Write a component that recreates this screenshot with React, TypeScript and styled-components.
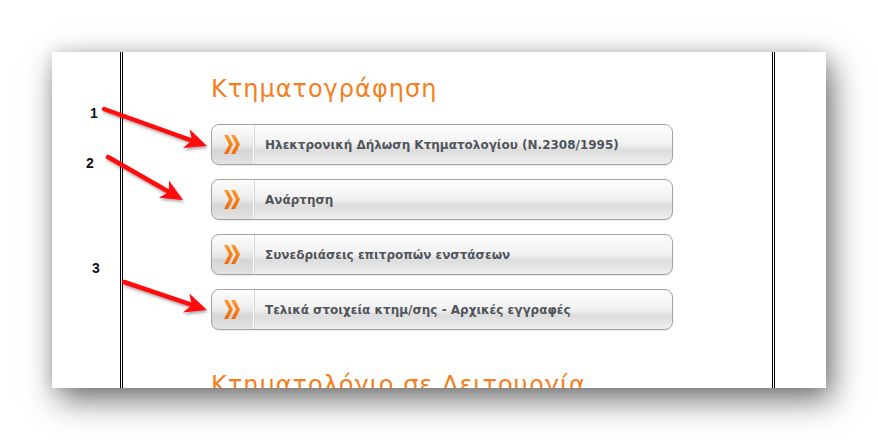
import React from 'react';
import styled, { createGlobalStyle } from 'styled-components';

const GlobalStyle = createGlobalStyle`
  html, body {
    margin: 0;
    padding: 0;
    background: #ffffff;
  }
  body {
    width: 878px;
    height: 440px;
    overflow: hidden;
    font-family: "DejaVu Sans", Verdana, sans-serif;
  }
`;

const Stage = styled.div`
  position: relative;
  width: 878px;
  height: 440px;
  padding: 52px 0 0 52px;
  box-sizing: border-box;
`;

const Panel = styled.div`
  display: flex;
  width: 774px;
  height: 336px;
  background: #ffffff;
  overflow: hidden;
  box-shadow: 6px 12px 30px rgba(0, 0, 0, 0.55), 0 0 14px rgba(0, 0, 0, 0.12);
`;

const Gutter = styled.div<{ $w: number }>`
  flex: 0 0 ${(p) => p.$w}px;
`;

const Rule = styled.div`
  flex: 0 0 1px;
  border-left: 1px solid #000;
  border-right: 1px solid #000;
`;

const Content = styled.div`
  flex: 1;
  display: flex;
  flex-direction: column;
  padding: 22px 0 0 88px;
`;

const SectionTitle = styled.h2`
  margin: 0;
  font-family: "DejaVu Sans", Verdana, sans-serif;
  font-weight: normal;
  font-size: 24px;
  line-height: 30px;
  letter-spacing: 1px;
  color: #f57f20;
`;

const TitleLine = styled.div`
  height: 2px;
  width: 510px;
  margin: 4px 0 16px -30px;
  background: linear-gradient(
    to right,
    rgba(220, 220, 220, 0) 0%,
    #dcdcdc 8%,
    #dcdcdc 85%,
    rgba(220, 220, 220, 0) 100%
  );
`;

const MenuList = styled.div`
  display: flex;
  flex-direction: column;
  gap: 14px;
`;

const MenuButton = styled.a`
  display: flex;
  align-items: stretch;
  width: 462px;
  height: 41px;
  box-sizing: border-box;
  border: 1px solid #a3a3a3;
  border-radius: 8px;
  overflow: hidden;
  text-decoration: none;
  background: linear-gradient(
    to bottom,
    #fdfdfd 0%,
    #f4f4f4 40%,
    #ececec 55%,
    #dddddd 64%,
    #e4e4e4 80%,
    #f0f0f0 100%
  );
  box-shadow: inset 0 1px 0 #ffffff, 0 1px 1px rgba(0, 0, 0, 0.08);
`;

const IconCell = styled.span`
  flex: 0 0 41px;
  display: flex;
  align-items: center;
  justify-content: center;
  border-right: 1px solid #ffffff;
  box-shadow: 1px 0 0 #d6d6d6;
  background: linear-gradient(
    to bottom,
    rgba(0, 0, 0, 0) 0%,
    rgba(0, 0, 0, 0.03) 60%,
    rgba(0, 0, 0, 0.05) 100%
  );
`;

const Label = styled.span`
  display: flex;
  align-items: center;
  padding-left: 11px;
  font-family: "DejaVu Sans", Verdana, sans-serif;
  font-weight: bold;
  font-size: 12px;
  color: #50555b;
`;

const NextTitle = styled(SectionTitle)`
  margin-top: 40px;
`;

const Overlay = styled.svg`
  position: absolute;
  left: 0;
  top: 0;
  width: 878px;
  height: 440px;
  pointer-events: none;
`;

const Marker = styled.span<{ $x: number; $y: number }>`
  position: absolute;
  left: ${(p) => p.$x}px;
  top: ${(p) => p.$y}px;
  font-family: "Liberation Sans", Arial, sans-serif;
  font-weight: bold;
  font-size: 14px;
  line-height: 14px;
  color: #111;
`;

const Chevrons = () => (
  <svg width="17" height="19" viewBox="0 0 17 19">
    <defs>
      <linearGradient id="chev" x1="0" y1="0" x2="0" y2="1">
        <stop offset="0" stopColor="#ff9a2e" />
        <stop offset="1" stopColor="#ee6a08" />
      </linearGradient>
    </defs>
    <path d="M0 0 H4 L9 9.5 L4 19 H0 L5 9.5 Z" fill="url(#chev)" />
    <path d="M7 0 H11 L16 9.5 L11 19 H7 L12 9.5 Z" fill="url(#chev)" />
  </svg>
);

const items = [
  'Ηλεκτρονική Δήλωση Κτηματολογίου (Ν.2308/1995)',
  'Ανάρτηση',
  'Συνεδριάσεις επιτροπών ενστάσεων',
  'Τελικά στοιχεία κτημ/σης - Αρχικές εγγραφές',
];

type Arrow = { x1: number; y1: number; x2: number; y2: number };

const arrows: Arrow[] = [
  { x1: 104, y1: 109, x2: 207, y2: 146 },
  { x1: 108, y1: 157, x2: 183, y2: 200 },
  { x1: 124, y1: 282, x2: 207, y2: 310 },
];

const arrowHead = (a: Arrow) => {
  const dx = a.x2 - a.x1;
  const dy = a.y2 - a.y1;
  const len = Math.hypot(dx, dy);
  const ux = dx / len;
  const uy = dy / len;
  const px = -uy;
  const py = ux;
  const back = 22;
  const wing = 10;
  const notch = 16;
  const bx = a.x2 - ux * back;
  const by = a.y2 - uy * back;
  const nx = a.x2 - ux * notch;
  const ny = a.y2 - uy * notch;
  return [
    `${a.x2},${a.y2}`,
    `${bx + px * wing},${by + py * wing}`,
    `${nx},${ny}`,
    `${bx - px * wing},${by - py * wing}`,
  ].join(' ');
};

const App: React.FC = () => {
  return (
    <>
      <GlobalStyle />
      <Stage>
        <Panel>
          <Gutter $w={68} />
          <Rule />
          <Content>
            <SectionTitle>Κτηματογράφηση</SectionTitle>
            <TitleLine />
            <MenuList>
              {items.map((text) => (
                <MenuButton key={text} href="#">
                  <IconCell>
                    <Chevrons />
                  </IconCell>
                  <Label>{text}</Label>
                </MenuButton>
              ))}
            </MenuList>
            <NextTitle>Κτηματολόγιο σε Λειτουργία</NextTitle>
          </Content>
          <Rule />
          <Gutter $w={51} />
        </Panel>

        <Marker $x={90} $y={106}>1</Marker>
        <Marker $x={86} $y={156}>2</Marker>
        <Marker $x={92} $y={261}>3</Marker>

        <Overlay viewBox="0 0 878 440">
          <defs>
            <filter id="shade" x="-20%" y="-20%" width="140%" height="140%">
              <feDropShadow dx="1" dy="2" stdDeviation="1.5" floodColor="#000" floodOpacity="0.35" />
            </filter>
          </defs>
          {arrows.map((a, i) => {
            const len = Math.hypot(a.x2 - a.x1, a.y2 - a.y1);
            const ex = a.x2 - ((a.x2 - a.x1) / len) * 16;
            const ey = a.y2 - ((a.y2 - a.y1) / len) * 16;
            return (
              <g key={i} filter="url(#shade)">
                <line x1={a.x1} y1={a.y1} x2={ex} y2={ey} stroke="#ff0a0a" strokeWidth="4.5" strokeLinecap="round" />
                <polygon points={arrowHead(a)} fill="#ff0a0a" />
              </g>
            );
          })}
        </Overlay>
      </Stage>
    </>
  );
};

export default App;
